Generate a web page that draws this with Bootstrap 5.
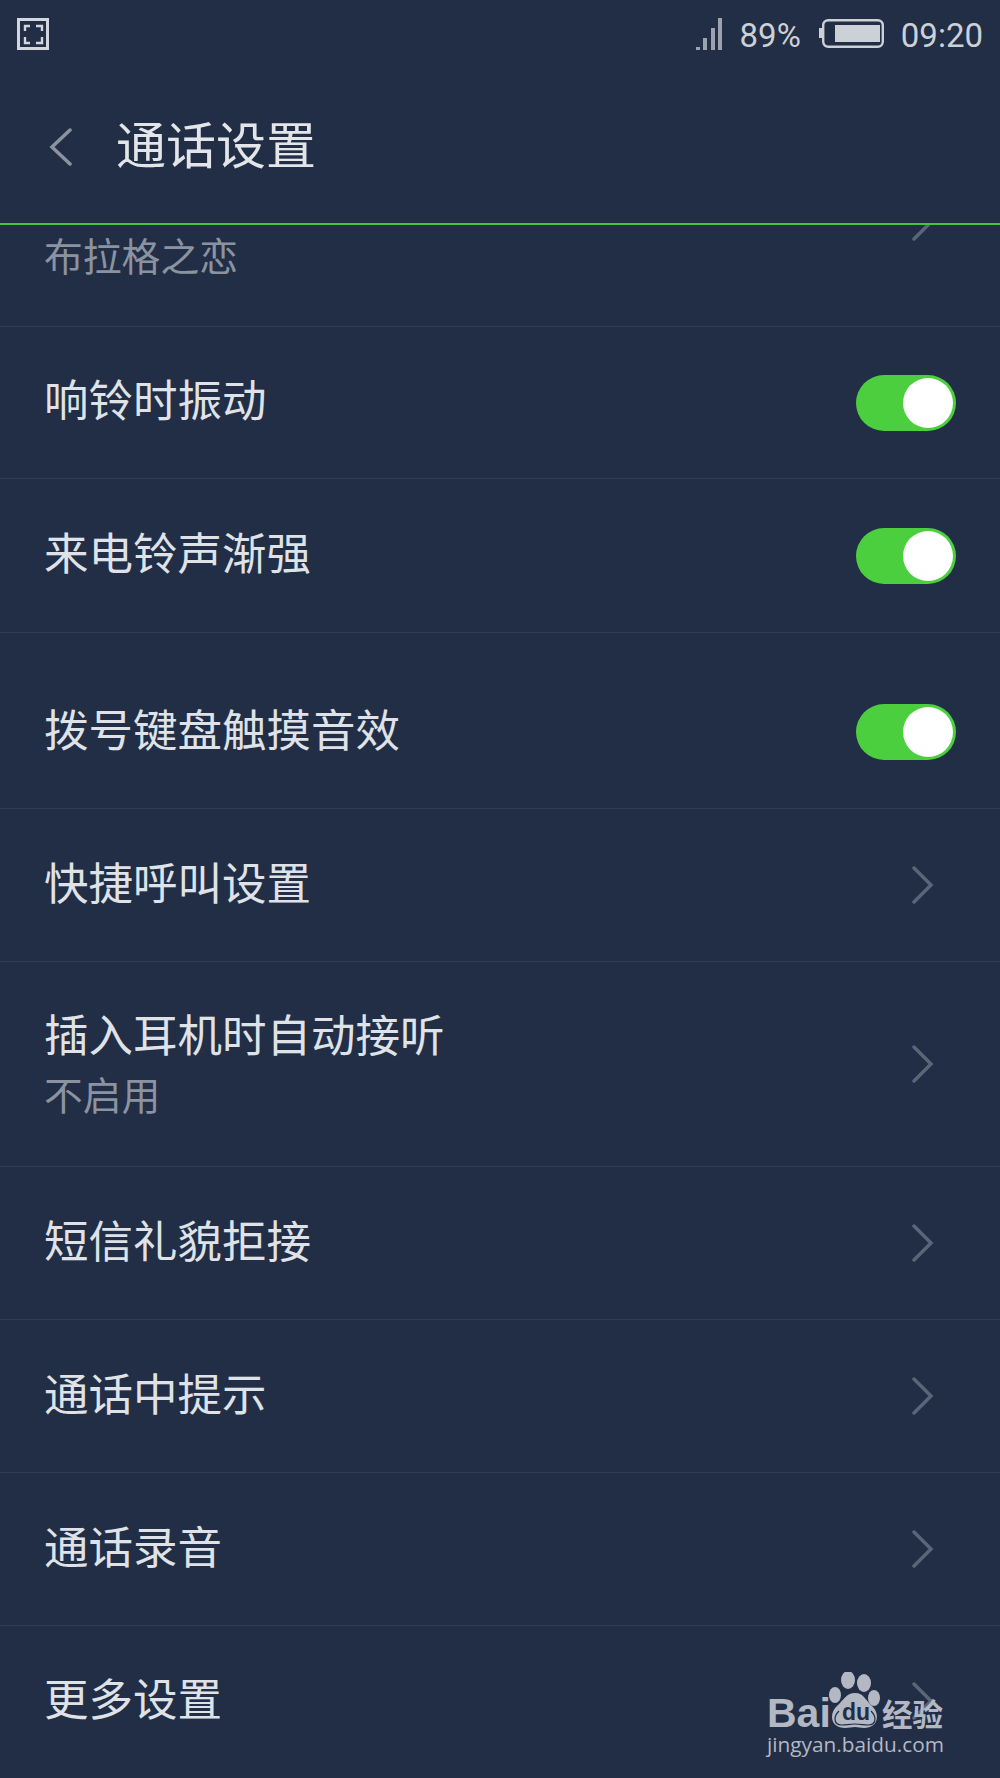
<!DOCTYPE html>
<html lang="zh">
<head>
  <meta charset="UTF-8" />
  <meta name="viewport" content="width=device-width, initial-scale=1.0"/>
  <title>通话设置</title>
  <link href="https://cdn.jsdelivr.net/npm/bootstrap@5.3.2/dist/css/bootstrap.min.css" rel="stylesheet"/>
  <style>
    body {
      background-color: #222e46;
      color: #dfe2e6;
      font-family: "Roboto", "Noto Sans CJK SC", sans-serif;
      height: 1778px;
      overflow: hidden;
    }
    .status-bar { height: 70px; padding: 0 17px 2px; color: #ccd0d7; font-size: 33px; }
    .status-bar svg { display: block; }
    .status-pct { margin-left: 18px; margin-top: 4px; }
    .status-batt { margin-left: 18px; }
    .status-time { margin-left: 17px; margin-top: 4px; }
    .title-bar { height: 155px; padding-left: 49px; border-bottom: 2px solid #45c23c; margin-bottom: -2px; background-color: #222e46; position: relative; z-index: 1; }
    .title-text { font-size: 50px; margin-left: 43px; color: #e3e5e9; line-height: 1; }
    .setting-row { padding: 0 44px; border-bottom: 1px solid #313d57; }
    .row-label { font-size: 44.5px; line-height: 60px; }
    .row-lift { margin-bottom: 2px; }
    .row-sub { font-size: 38.8px; line-height: 52px; color: #8b93a1; }
    .sub-gap { margin-top: 4px; }
    .sub-top { padding-top: 9px; }
    .two-line { margin-top: 2px; }
    .chev { margin-right: 22px; flex: none; }
    .chev-cut { margin-top: -20px; }
    .toggle-pill { width: 100px; height: 56px; border-radius: 28px; background-color: #4ccf3f; position: relative; flex: none; }
    .toggle-knob { position: absolute; top: 3px; right: 3px; width: 50px; height: 50px; border-radius: 50%; background-color: #fff; }
    .rh-104 { height: 104px; }
    .rh-150 { height: 150px; }
    .rh-152 { height: 152px; }
    .rh-153 { height: 153px; }
    .rh-154 { height: 154px; }
    .rh-176 { height: 176px; }
    .rh-205 { height: 205px; }
    .watermark { position: absolute; left: 767px; top: 1672px; color: #b3b8c3; width: 190px; }
    .wm-url { font-size: 20.8px; line-height: 1; font-family: "Open Sans", sans-serif; margin-top: -4px; }
    .gap-block { margin-top: 22px; }
  </style>
</head>
<body>
  <!-- Status bar -->
  <div class="status-bar d-flex align-items-center">
    <svg width="32" height="32" viewBox="0 0 32 32" fill="none" stroke="#d3d6dc">
      <rect x="1.5" y="1.5" width="29" height="29" stroke-width="3"/>
      <path d="M8 13V8h5M19 8h6v5M25 19v6h-6M13 25H8v-6" stroke-width="2.4"/>
    </svg>
    <div class="ms-auto d-flex align-items-center">
      <svg width="26" height="32" viewBox="0 0 26 32" fill="#9ca2ae">
        <rect x="0" y="29" width="4" height="3"/>
        <rect x="7" y="20" width="4" height="12"/>
        <rect x="15" y="10" width="4" height="22"/>
        <rect x="22" y="0" width="4" height="32"/>
      </svg>
      <span class="status-pct">89%</span>
      <svg class="status-batt" width="65" height="30" viewBox="0 0 65 30" fill="none">
        <rect x="0" y="9" width="4" height="10" fill="#ccd0d7"/>
        <rect x="4.2" y="1.2" width="59.6" height="26.6" rx="5" stroke="#ccd0d7" stroke-width="2.4"/>
        <rect x="16" y="6" width="45" height="17" fill="#ccd0d7"/>
      </svg>
      <span class="status-time">09:20</span>
    </div>
  </div>

  <!-- Title -->
  <div class="title-bar d-flex align-items-center">
    <svg width="24" height="38" viewBox="0 0 24 38" fill="none" stroke="#8b93a1" stroke-width="3.5" stroke-linecap="round">
      <path d="M21 2 3 19l18 17"/>
    </svg>
    <span class="title-text">通话设置</span>
  </div>

  <!-- Settings list -->
  <div class="setting-row rh-104 d-flex justify-content-between align-items-start">
    <div class="row-sub sub-top">布拉格之恋</div>
    <svg class="chev chev-cut" width="22" height="38" viewBox="0 0 22 38" fill="none" stroke="#5b6578" stroke-width="3.5" stroke-linecap="round"><path d="M2 2l17 17L2 36"/></svg>
  </div>
  <div class="setting-row rh-152 d-flex align-items-center justify-content-between">
    <span class="row-label row-lift">响铃时振动</span>
    <span class="toggle-pill"><span class="toggle-knob"></span></span>
  </div>
  <div class="setting-row rh-154 d-flex align-items-center justify-content-between">
    <span class="row-label row-lift">来电铃声渐强</span>
    <span class="toggle-pill"><span class="toggle-knob"></span></span>
  </div>
  <div class="setting-row rh-176 d-flex align-items-center justify-content-between">
    <span class="row-label gap-block">拨号键盘触摸音效</span>
    <span class="toggle-pill gap-block"><span class="toggle-knob"></span></span>
  </div>
  <div class="setting-row rh-153 d-flex align-items-center justify-content-between">
    <span class="row-label">快捷呼叫设置</span>
    <svg class="chev" width="22" height="38" viewBox="0 0 22 38" fill="none" stroke="#5b6578" stroke-width="3.5" stroke-linecap="round"><path d="M2 2l17 17L2 36"/></svg>
  </div>
  <div class="setting-row rh-205 d-flex align-items-center justify-content-between">
    <div class="two-line">
      <div class="row-label">插入耳机时自动接听</div>
      <div class="row-sub sub-gap">不启用</div>
    </div>
    <svg class="chev" width="22" height="38" viewBox="0 0 22 38" fill="none" stroke="#5b6578" stroke-width="3.5" stroke-linecap="round"><path d="M2 2l17 17L2 36"/></svg>
  </div>
  <div class="setting-row rh-153 d-flex align-items-center justify-content-between">
    <span class="row-label">短信礼貌拒接</span>
    <svg class="chev" width="22" height="38" viewBox="0 0 22 38" fill="none" stroke="#5b6578" stroke-width="3.5" stroke-linecap="round"><path d="M2 2l17 17L2 36"/></svg>
  </div>
  <div class="setting-row rh-153 d-flex align-items-center justify-content-between">
    <span class="row-label">通话中提示</span>
    <svg class="chev" width="22" height="38" viewBox="0 0 22 38" fill="none" stroke="#5b6578" stroke-width="3.5" stroke-linecap="round"><path d="M2 2l17 17L2 36"/></svg>
  </div>
  <div class="setting-row rh-153 d-flex align-items-center justify-content-between">
    <span class="row-label">通话录音</span>
    <svg class="chev" width="22" height="38" viewBox="0 0 22 38" fill="none" stroke="#5b6578" stroke-width="3.5" stroke-linecap="round"><path d="M2 2l17 17L2 36"/></svg>
  </div>
  <div class="d-flex align-items-center justify-content-between setting-row border-0 rh-150">
    <span class="row-label">更多设置</span>
    <svg class="chev" width="22" height="38" viewBox="0 0 22 38" fill="none" stroke="#5b6578" stroke-width="3.5" stroke-linecap="round"><path d="M2 2l17 17L2 36"/></svg>
  </div>

  <!-- Watermark -->
  <div class="watermark">
    <svg width="190" height="66" viewBox="0 0 190 66" fill="#b3b8c3">
      <ellipse cx="68" cy="23" rx="6" ry="8"/>
      <ellipse cx="81" cy="8" rx="7" ry="9"/>
      <ellipse cx="97" cy="11" rx="7" ry="9"/>
      <ellipse cx="107" cy="26" rx="6" ry="8"/>
      <path d="M88 21c9 0 11 8 17 13 8 7 7 22-8 22-4 0-6-1-9-1s-6 1-10 1c-15 0-16-15-8-22 6-5 9-13 18-13z"/>
      <path d="M72 39c-3 3-4 6-4 8 0 4 3 6 7 6 4 0 8-1 13-1s9 1 13 1c4 0 7-2 7-6 0-2-1-5-4-8" fill="none" stroke="#222e46" stroke-width="1.2"/>
      <text x="75" y="48" font-family="Liberation Sans" font-weight="700" font-size="23" fill="#222e46">du</text>
      <text x="0" y="55" font-family="Liberation Sans" font-weight="700" font-size="41">Bai</text>
      <text x="115" y="54" font-family="Noto Sans CJK SC" font-weight="700" font-size="30.5">经验</text>
    </svg>
    <div class="wm-url">jingyan.baidu.com</div>
  </div>

  <script src="https://cdn.jsdelivr.net/npm/bootstrap@5.3.2/dist/js/bootstrap.bundle.min.js"></script>
</body>
</html>
